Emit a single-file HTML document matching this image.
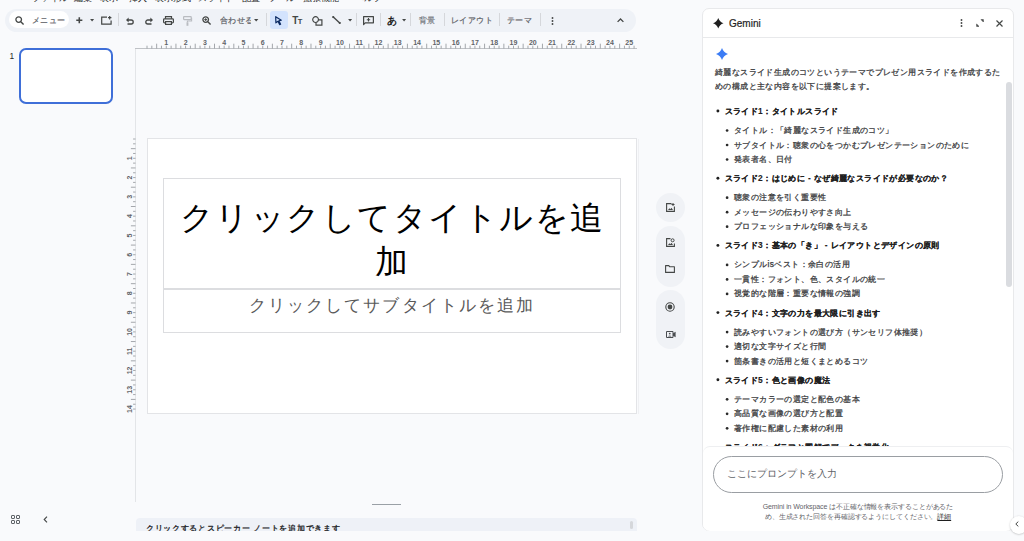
<!DOCTYPE html>
<html lang="ja">
<head>
<meta charset="utf-8">
<style>
*{box-sizing:border-box;margin:0;padding:0}
html,body{width:1024px;height:541px;overflow:hidden;background:#f9fafc;font-family:"Liberation Sans",sans-serif;color:#1f1f1f}
.a{position:absolute}
svg{position:absolute;overflow:visible}
/* toolbar */
#tb{left:5px;top:8.5px;width:631px;height:23px;border-radius:11.5px;background:#eff2f7}
#search{left:9px;top:11px;width:60px;height:17px;border-radius:9px;background:#fff}
.sep{position:absolute;top:13px;width:1px;height:13px;background:#d5d7db}
.tt{position:absolute;font-size:8.4px;color:#5f6368;line-height:10px;white-space:nowrap;top:15px;-webkit-text-stroke:0.2px currentColor;letter-spacing:0.4px}
.menu{position:absolute;top:-7px;font-size:8.6px;line-height:10px;color:#1f1f1f;white-space:nowrap}
/* ruler */
.rn{position:absolute;font-size:6px;line-height:6px;color:#5f6368;font-weight:bold;width:12px;text-align:center}
/* slide */
#slide{left:147px;top:138px;width:490px;height:276px;background:#fff;border:1px solid #e3e4e7}
#titlebox{left:163px;top:178px;width:458px;height:111px;border:1px solid #dcdde0}
#subbox{left:163px;top:289px;width:458px;height:44px;border:1px solid #dcdde0}
/* gemini */
#gp{left:702px;top:8px;width:312px;height:523px;background:#fff;border:1px solid #e8e9eb;border-radius:7px;overflow:hidden}
.gt{position:absolute;font-size:8.4px;line-height:12px;color:#3c4043;white-space:nowrap;letter-spacing:0.4px}
.gs{color:#38393b;-webkit-text-stroke:0.25px #38393b}
.gb{font-weight:bold;color:#1f1f1f;-webkit-text-stroke:0.1px #1f1f1f}
.dot{position:absolute;width:3px;height:3px;border-radius:50%;background:#1f1f1f}
.d2{width:2.8px;height:2.8px;background:#2a2a2a}
</style>
</head>
<body>
<!-- menu remnants -->
<div class="menu" style="left:32px">ファイル</div>
<div class="menu" style="left:74px">編集</div>
<div class="menu" style="left:100px">表示</div>
<div class="menu" style="left:129px">挿入</div>
<div class="menu" style="left:155px">表示形式</div>
<div class="menu" style="left:198px">スライド</div>
<div class="menu" style="left:242px">配置</div>
<div class="menu" style="left:268px">ツール</div>
<div class="menu" style="left:303px">拡張機能</div>
<div class="menu" style="left:355px">ヘルプ</div>

<!-- toolbar -->
<div id="tb" class="a"></div>
<div id="search" class="a"></div>
<!-- search icon -->
<svg style="left:15px;top:16px" width="10" height="9" viewBox="0 0 10 9"><circle cx="3.7" cy="3.6" r="2.8" fill="none" stroke="#444746" stroke-width="1.3"/><path d="M5.8 5.7 L8.6 8.4" stroke="#444746" stroke-width="1.4"/></svg>
<div class="tt" style="left:31.5px;color:#5f6368;letter-spacing:0.6px">メニュー</div>
<!-- plus -->
<svg style="left:75.5px;top:16.6px" width="6.6" height="6.6" viewBox="0 0 8 8"><path d="M4 0.3V7.7M0.3 4H7.7" stroke="#444746" stroke-width="1.9"/></svg>
<svg style="left:90.2px;top:19px" width="4.2" height="2.4" viewBox="0 0 5 3"><path d="M0 0H5L2.5 3Z" fill="#444746"/></svg>
<!-- new slide -->
<svg style="left:101px;top:16px" width="11" height="9" viewBox="0 0 11 9"><path d="M6 1.1H0.7V8.1H10.1V4.6" fill="none" stroke="#444746" stroke-width="1.2"/><path d="M8.7 0V3.4M7 1.7H10.4" stroke="#444746" stroke-width="1.2"/></svg>
<div class="sep" style="left:118px"></div>
<!-- undo -->
<svg style="left:126px;top:17px" width="8" height="8" viewBox="0 0 8 8"><path d="M2 3H5.2A2 2 0 0 1 5.2 7H1.5" fill="none" stroke="#444746" stroke-width="1.3"/><path d="M0 3L2.6 0.6V5.4Z" fill="#444746"/></svg>
<!-- redo -->
<svg style="left:145px;top:17px" width="8" height="8" viewBox="0 0 8 8"><path d="M6 3H2.8A2 2 0 0 0 2.8 7H6.5" fill="none" stroke="#444746" stroke-width="1.3"/><path d="M8 3L5.4 0.6V5.4Z" fill="#444746"/></svg>
<!-- print -->
<svg style="left:163px;top:16px" width="11" height="9" viewBox="0 0 11 9"><path d="M2.5 2.8V0.6H8.5V2.8" fill="none" stroke="#444746" stroke-width="1.2"/><rect x="0.6" y="2.8" width="9.8" height="4" rx="0.8" fill="none" stroke="#444746" stroke-width="1.2"/><rect x="2.6" y="5.6" width="5.8" height="2.8" fill="#eff2f7" stroke="#444746" stroke-width="1.2"/></svg>
<!-- paint format (disabled) -->
<svg style="left:183px;top:16px" width="9" height="10" viewBox="0 0 9 10"><rect x="0.6" y="0.6" width="7.6" height="3" rx="0.5" fill="none" stroke="#b9bcc1" stroke-width="1.2"/><path d="M8 2.2H8.6V5H4.4V6.4" fill="none" stroke="#b9bcc1" stroke-width="1.1"/><rect x="3.5" y="6.3" width="1.9" height="3.5" fill="#b9bcc1"/></svg>
<!-- zoom -->
<svg style="left:202px;top:16px" width="10" height="9" viewBox="0 0 10 9"><circle cx="3.7" cy="3.6" r="2.8" fill="none" stroke="#444746" stroke-width="1.3"/><path d="M5.8 5.7 L8.6 8.4" stroke="#444746" stroke-width="1.4"/><path d="M3.7 2.2V5M2.3 3.6H5.1" stroke="#444746" stroke-width="1"/></svg>
<div class="tt" style="left:220px;width:30.5px;overflow:hidden;color:#5f6368">合わせる</div>
<svg style="left:254.2px;top:18.8px" width="4.4" height="2.6" viewBox="0 0 5 3"><path d="M0 0H5L2.5 3Z" fill="#444746"/></svg>
<div class="sep" style="left:266px"></div>
<!-- select -->
<div class="a" style="left:269.5px;top:11px;width:18px;height:17.5px;border-radius:3px;background:#d3e3fd"></div>
<svg style="left:275px;top:16px" width="7" height="9" viewBox="0 0 7 9"><path d="M0.7 0.7L6.3 4.2L3.9 4.8L5.6 8.2L4.6 8.6L3 5.3L0.9 6.8Z" fill="none" stroke="#0b2a63" stroke-width="1.2" stroke-linejoin="round"/></svg>
<!-- Tt -->
<div class="a" style="left:292.3px;top:14.5px;font-size:10px;line-height:11px;font-weight:bold;color:#444746;letter-spacing:-0.6px">T<span style="font-size:7.5px">T</span></div>
<!-- shape -->
<svg style="left:312px;top:16px" width="11" height="10" viewBox="0 0 11 10"><circle cx="3.6" cy="3.6" r="2.9" fill="none" stroke="#444746" stroke-width="1.2"/><path d="M6.6 3.9H9.9V9.2H4V6.6" fill="none" stroke="#444746" stroke-width="1.2"/></svg>
<!-- line -->
<svg style="left:332px;top:16px" width="9" height="8" viewBox="0 0 9 8"><path d="M1 0.8L8 7.2" stroke="#444746" stroke-width="1.4"/><circle cx="1.2" cy="1" r="1.1" fill="#444746"/><circle cx="7.8" cy="7" r="1.1" fill="#444746"/></svg>
<svg style="left:348px;top:19px" width="4.2" height="2.4" viewBox="0 0 5 3"><path d="M0 0H5L2.5 3Z" fill="#444746"/></svg>
<div class="sep" style="left:356px"></div>
<!-- insert comment box -->
<svg style="left:363px;top:16px" width="11" height="9" viewBox="0 0 11 9"><path d="M0.6 8.6V0.6H10.4V6.8H2.2Z" fill="none" stroke="#444746" stroke-width="1.2" stroke-linejoin="round"/><path d="M5.5 2V5.4M3.8 3.7H7.2" stroke="#444746" stroke-width="1.1"/></svg>
<div class="sep" style="left:380px"></div>
<div class="a" style="left:386.5px;top:14.5px;font-size:10px;line-height:12px;color:#1f1f1f;font-weight:bold">あ</div>
<svg style="left:402px;top:19px" width="4.2" height="2.4" viewBox="0 0 5 3"><path d="M0 0H5L2.5 3Z" fill="#444746"/></svg>
<div class="sep" style="left:410px"></div>
<div class="tt" style="left:419px;color:#75797e">背景</div>
<div class="sep" style="left:444px"></div>
<div class="tt" style="left:451px;color:#5f6368">レイアウト</div>
<div class="sep" style="left:498.5px"></div>
<div class="tt" style="left:507px;color:#5f6368">テーマ</div>
<div class="sep" style="left:540px"></div>
<!-- more vert -->
<svg style="left:550.5px;top:16.5px" width="3" height="8" viewBox="0 0 3 8"><circle cx="1.5" cy="1" r="0.95" fill="#444746"/><circle cx="1.5" cy="4" r="0.95" fill="#444746"/><circle cx="1.5" cy="7" r="0.95" fill="#444746"/></svg>
<!-- caret up -->
<svg style="left:616.5px;top:18px" width="7" height="4.5" viewBox="0 0 7 4.5"><path d="M0.6 3.9L3.5 1L6.4 3.9" fill="none" stroke="#444746" stroke-width="1.3"/></svg>

<!-- filmstrip -->
<div class="a" style="left:9.5px;top:50.5px;font-size:8.4px;line-height:10px;color:#1f1f1f">1</div>
<div class="a" style="left:19px;top:48px;width:94px;height:56px;border:2px solid #3f6fd8;border-radius:7px;background:#fff"></div>

<!-- canvas frame lines -->
<div class="a" style="left:135px;top:48px;width:1px;height:454px;background:#e3e5e8"></div>
<div class="a" style="left:135px;top:48px;width:502px;height:1px;background:#bfc2c6"></div>
<!-- horizontal ruler -->
<svg style="left:0;top:0" width="1024" height="60"><g stroke="#8e9297" stroke-width="0.8"><line x1="147.00" y1="45.7" x2="147.00" y2="48.5"/><line x1="151.82" y1="45.7" x2="151.82" y2="48.5"/><line x1="156.65" y1="43.7" x2="156.65" y2="48.5"/><line x1="161.47" y1="45.7" x2="161.47" y2="48.5"/><line x1="166.29" y1="45.7" x2="166.29" y2="48.5"/><line x1="171.11" y1="45.7" x2="171.11" y2="48.5"/><line x1="175.94" y1="43.7" x2="175.94" y2="48.5"/><line x1="180.76" y1="45.7" x2="180.76" y2="48.5"/><line x1="185.58" y1="45.7" x2="185.58" y2="48.5"/><line x1="190.40" y1="45.7" x2="190.40" y2="48.5"/><line x1="195.22" y1="43.7" x2="195.22" y2="48.5"/><line x1="200.05" y1="45.7" x2="200.05" y2="48.5"/><line x1="204.87" y1="45.7" x2="204.87" y2="48.5"/><line x1="209.69" y1="45.7" x2="209.69" y2="48.5"/><line x1="214.51" y1="43.7" x2="214.51" y2="48.5"/><line x1="219.34" y1="45.7" x2="219.34" y2="48.5"/><line x1="224.16" y1="45.7" x2="224.16" y2="48.5"/><line x1="228.98" y1="45.7" x2="228.98" y2="48.5"/><line x1="233.81" y1="43.7" x2="233.81" y2="48.5"/><line x1="238.63" y1="45.7" x2="238.63" y2="48.5"/><line x1="243.45" y1="45.7" x2="243.45" y2="48.5"/><line x1="248.27" y1="45.7" x2="248.27" y2="48.5"/><line x1="253.09" y1="43.7" x2="253.09" y2="48.5"/><line x1="257.92" y1="45.7" x2="257.92" y2="48.5"/><line x1="262.74" y1="45.7" x2="262.74" y2="48.5"/><line x1="267.56" y1="45.7" x2="267.56" y2="48.5"/><line x1="272.38" y1="43.7" x2="272.38" y2="48.5"/><line x1="277.21" y1="45.7" x2="277.21" y2="48.5"/><line x1="282.03" y1="45.7" x2="282.03" y2="48.5"/><line x1="286.85" y1="45.7" x2="286.85" y2="48.5"/><line x1="291.67" y1="43.7" x2="291.67" y2="48.5"/><line x1="296.50" y1="45.7" x2="296.50" y2="48.5"/><line x1="301.32" y1="45.7" x2="301.32" y2="48.5"/><line x1="306.14" y1="45.7" x2="306.14" y2="48.5"/><line x1="310.97" y1="43.7" x2="310.97" y2="48.5"/><line x1="315.79" y1="45.7" x2="315.79" y2="48.5"/><line x1="320.61" y1="45.7" x2="320.61" y2="48.5"/><line x1="325.43" y1="45.7" x2="325.43" y2="48.5"/><line x1="330.25" y1="43.7" x2="330.25" y2="48.5"/><line x1="335.08" y1="45.7" x2="335.08" y2="48.5"/><line x1="339.90" y1="45.7" x2="339.90" y2="48.5"/><line x1="344.72" y1="45.7" x2="344.72" y2="48.5"/><line x1="349.54" y1="43.7" x2="349.54" y2="48.5"/><line x1="354.37" y1="45.7" x2="354.37" y2="48.5"/><line x1="359.19" y1="45.7" x2="359.19" y2="48.5"/><line x1="364.01" y1="45.7" x2="364.01" y2="48.5"/><line x1="368.83" y1="43.7" x2="368.83" y2="48.5"/><line x1="373.66" y1="45.7" x2="373.66" y2="48.5"/><line x1="378.48" y1="45.7" x2="378.48" y2="48.5"/><line x1="383.30" y1="45.7" x2="383.30" y2="48.5"/><line x1="388.12" y1="43.7" x2="388.12" y2="48.5"/><line x1="392.95" y1="45.7" x2="392.95" y2="48.5"/><line x1="397.77" y1="45.7" x2="397.77" y2="48.5"/><line x1="402.59" y1="45.7" x2="402.59" y2="48.5"/><line x1="407.41" y1="43.7" x2="407.41" y2="48.5"/><line x1="412.24" y1="45.7" x2="412.24" y2="48.5"/><line x1="417.06" y1="45.7" x2="417.06" y2="48.5"/><line x1="421.88" y1="45.7" x2="421.88" y2="48.5"/><line x1="426.70" y1="43.7" x2="426.70" y2="48.5"/><line x1="431.53" y1="45.7" x2="431.53" y2="48.5"/><line x1="436.35" y1="45.7" x2="436.35" y2="48.5"/><line x1="441.17" y1="45.7" x2="441.17" y2="48.5"/><line x1="446.00" y1="43.7" x2="446.00" y2="48.5"/><line x1="450.82" y1="45.7" x2="450.82" y2="48.5"/><line x1="455.64" y1="45.7" x2="455.64" y2="48.5"/><line x1="460.46" y1="45.7" x2="460.46" y2="48.5"/><line x1="465.28" y1="43.7" x2="465.28" y2="48.5"/><line x1="470.11" y1="45.7" x2="470.11" y2="48.5"/><line x1="474.93" y1="45.7" x2="474.93" y2="48.5"/><line x1="479.75" y1="45.7" x2="479.75" y2="48.5"/><line x1="484.57" y1="43.7" x2="484.57" y2="48.5"/><line x1="489.40" y1="45.7" x2="489.40" y2="48.5"/><line x1="494.22" y1="45.7" x2="494.22" y2="48.5"/><line x1="499.04" y1="45.7" x2="499.04" y2="48.5"/><line x1="503.87" y1="43.7" x2="503.87" y2="48.5"/><line x1="508.69" y1="45.7" x2="508.69" y2="48.5"/><line x1="513.51" y1="45.7" x2="513.51" y2="48.5"/><line x1="518.33" y1="45.7" x2="518.33" y2="48.5"/><line x1="523.15" y1="43.7" x2="523.15" y2="48.5"/><line x1="527.98" y1="45.7" x2="527.98" y2="48.5"/><line x1="532.80" y1="45.7" x2="532.80" y2="48.5"/><line x1="537.62" y1="45.7" x2="537.62" y2="48.5"/><line x1="542.44" y1="43.7" x2="542.44" y2="48.5"/><line x1="547.27" y1="45.7" x2="547.27" y2="48.5"/><line x1="552.09" y1="45.7" x2="552.09" y2="48.5"/><line x1="556.91" y1="45.7" x2="556.91" y2="48.5"/><line x1="561.73" y1="43.7" x2="561.73" y2="48.5"/><line x1="566.56" y1="45.7" x2="566.56" y2="48.5"/><line x1="571.38" y1="45.7" x2="571.38" y2="48.5"/><line x1="576.20" y1="45.7" x2="576.20" y2="48.5"/><line x1="581.02" y1="43.7" x2="581.02" y2="48.5"/><line x1="585.85" y1="45.7" x2="585.85" y2="48.5"/><line x1="590.67" y1="45.7" x2="590.67" y2="48.5"/><line x1="595.49" y1="45.7" x2="595.49" y2="48.5"/><line x1="600.32" y1="43.7" x2="600.32" y2="48.5"/><line x1="605.14" y1="45.7" x2="605.14" y2="48.5"/><line x1="609.96" y1="45.7" x2="609.96" y2="48.5"/><line x1="614.78" y1="45.7" x2="614.78" y2="48.5"/><line x1="619.61" y1="43.7" x2="619.61" y2="48.5"/><line x1="624.43" y1="45.7" x2="624.43" y2="48.5"/><line x1="629.25" y1="45.7" x2="629.25" y2="48.5"/><line x1="634.07" y1="45.7" x2="634.07" y2="48.5"/></g><g font-size="7" font-weight="bold" fill="#5f6368" text-anchor="middle" font-family="Liberation Sans"><text x="166.29" y="45">1</text><text x="185.58" y="45">2</text><text x="204.87" y="45">3</text><text x="224.16" y="45">4</text><text x="243.45" y="45">5</text><text x="262.74" y="45">6</text><text x="282.03" y="45">7</text><text x="301.32" y="45">8</text><text x="320.61" y="45">9</text><text x="339.90" y="45">10</text><text x="359.19" y="45">11</text><text x="378.48" y="45">12</text><text x="397.77" y="45">13</text><text x="417.06" y="45">14</text><text x="436.35" y="45">15</text><text x="455.64" y="45">16</text><text x="474.93" y="45">17</text><text x="494.22" y="45">18</text><text x="513.51" y="45">19</text><text x="532.80" y="45">20</text><text x="552.09" y="45">21</text><text x="571.38" y="45">22</text><text x="590.67" y="45">23</text><text x="609.96" y="45">24</text><text x="629.25" y="45">25</text></g></svg>
<!-- vertical ruler -->
<svg style="left:0;top:0" width="140" height="541"><g stroke="#8e9297" stroke-width="0.8"><line x1="133.1" y1="139.00" x2="135.5" y2="139.00"/><line x1="133.1" y1="143.82" x2="135.5" y2="143.82"/><line x1="130.9" y1="148.65" x2="135.5" y2="148.65"/><line x1="133.1" y1="153.47" x2="135.5" y2="153.47"/><line x1="133.1" y1="158.29" x2="135.5" y2="158.29"/><line x1="133.1" y1="163.11" x2="135.5" y2="163.11"/><line x1="130.9" y1="167.94" x2="135.5" y2="167.94"/><line x1="133.1" y1="172.76" x2="135.5" y2="172.76"/><line x1="133.1" y1="177.58" x2="135.5" y2="177.58"/><line x1="133.1" y1="182.40" x2="135.5" y2="182.40"/><line x1="130.9" y1="187.22" x2="135.5" y2="187.22"/><line x1="133.1" y1="192.05" x2="135.5" y2="192.05"/><line x1="133.1" y1="196.87" x2="135.5" y2="196.87"/><line x1="133.1" y1="201.69" x2="135.5" y2="201.69"/><line x1="130.9" y1="206.51" x2="135.5" y2="206.51"/><line x1="133.1" y1="211.34" x2="135.5" y2="211.34"/><line x1="133.1" y1="216.16" x2="135.5" y2="216.16"/><line x1="133.1" y1="220.98" x2="135.5" y2="220.98"/><line x1="130.9" y1="225.81" x2="135.5" y2="225.81"/><line x1="133.1" y1="230.63" x2="135.5" y2="230.63"/><line x1="133.1" y1="235.45" x2="135.5" y2="235.45"/><line x1="133.1" y1="240.27" x2="135.5" y2="240.27"/><line x1="130.9" y1="245.09" x2="135.5" y2="245.09"/><line x1="133.1" y1="249.92" x2="135.5" y2="249.92"/><line x1="133.1" y1="254.74" x2="135.5" y2="254.74"/><line x1="133.1" y1="259.56" x2="135.5" y2="259.56"/><line x1="130.9" y1="264.38" x2="135.5" y2="264.38"/><line x1="133.1" y1="269.21" x2="135.5" y2="269.21"/><line x1="133.1" y1="274.03" x2="135.5" y2="274.03"/><line x1="133.1" y1="278.85" x2="135.5" y2="278.85"/><line x1="130.9" y1="283.67" x2="135.5" y2="283.67"/><line x1="133.1" y1="288.50" x2="135.5" y2="288.50"/><line x1="133.1" y1="293.32" x2="135.5" y2="293.32"/><line x1="133.1" y1="298.14" x2="135.5" y2="298.14"/><line x1="130.9" y1="302.97" x2="135.5" y2="302.97"/><line x1="133.1" y1="307.79" x2="135.5" y2="307.79"/><line x1="133.1" y1="312.61" x2="135.5" y2="312.61"/><line x1="133.1" y1="317.43" x2="135.5" y2="317.43"/><line x1="130.9" y1="322.25" x2="135.5" y2="322.25"/><line x1="133.1" y1="327.08" x2="135.5" y2="327.08"/><line x1="133.1" y1="331.90" x2="135.5" y2="331.90"/><line x1="133.1" y1="336.72" x2="135.5" y2="336.72"/><line x1="130.9" y1="341.54" x2="135.5" y2="341.54"/><line x1="133.1" y1="346.37" x2="135.5" y2="346.37"/><line x1="133.1" y1="351.19" x2="135.5" y2="351.19"/><line x1="133.1" y1="356.01" x2="135.5" y2="356.01"/><line x1="130.9" y1="360.83" x2="135.5" y2="360.83"/><line x1="133.1" y1="365.66" x2="135.5" y2="365.66"/><line x1="133.1" y1="370.48" x2="135.5" y2="370.48"/><line x1="133.1" y1="375.30" x2="135.5" y2="375.30"/><line x1="130.9" y1="380.12" x2="135.5" y2="380.12"/><line x1="133.1" y1="384.95" x2="135.5" y2="384.95"/><line x1="133.1" y1="389.77" x2="135.5" y2="389.77"/><line x1="133.1" y1="394.59" x2="135.5" y2="394.59"/><line x1="130.9" y1="399.41" x2="135.5" y2="399.41"/><line x1="133.1" y1="404.24" x2="135.5" y2="404.24"/><line x1="133.1" y1="409.06" x2="135.5" y2="409.06"/></g><g font-size="7" font-weight="bold" fill="#5f6368" text-anchor="middle" font-family="Liberation Sans"><text x="0" y="0" transform="translate(131.8,158.29) rotate(-90)">1</text><text x="0" y="0" transform="translate(131.8,177.58) rotate(-90)">2</text><text x="0" y="0" transform="translate(131.8,196.87) rotate(-90)">3</text><text x="0" y="0" transform="translate(131.8,216.16) rotate(-90)">4</text><text x="0" y="0" transform="translate(131.8,235.45) rotate(-90)">5</text><text x="0" y="0" transform="translate(131.8,254.74) rotate(-90)">6</text><text x="0" y="0" transform="translate(131.8,274.03) rotate(-90)">7</text><text x="0" y="0" transform="translate(131.8,293.32) rotate(-90)">8</text><text x="0" y="0" transform="translate(131.8,312.61) rotate(-90)">9</text><text x="0" y="0" transform="translate(131.8,331.90) rotate(-90)">10</text><text x="0" y="0" transform="translate(131.8,351.19) rotate(-90)">11</text><text x="0" y="0" transform="translate(131.8,370.48) rotate(-90)">12</text><text x="0" y="0" transform="translate(131.8,389.77) rotate(-90)">13</text><text x="0" y="0" transform="translate(131.8,409.06) rotate(-90)">14</text></g></svg>

<!-- slide -->
<div id="slide" class="a"></div>
<div class="a" style="left:638px;top:139px;width:1px;height:275px;background:#eff0f3"></div>
<div id="titlebox" class="a"></div>
<div id="subbox" class="a"></div>
<div class="a" style="left:163px;top:195.8px;width:458px;text-align:center;font-size:33.4px;line-height:44px;color:#000;letter-spacing:1.5px">クリックしてタイトルを追<br>加</div>
<div class="a" style="left:163px;top:295px;width:458px;text-align:center;font-size:17px;line-height:22px;color:#595959;letter-spacing:2.1px">クリックしてサブタイトルを追加</div>

<!-- side icon rail -->
<div class="a" style="left:656px;top:193px;width:29px;height:29px;border-radius:14.5px;background:#f0f2f6"></div>
<div class="a" style="left:656px;top:225.5px;width:29px;height:61px;border-radius:14.5px;background:#f0f2f6"></div>
<div class="a" style="left:656px;top:290px;width:29px;height:59px;border-radius:14.5px;background:#f0f2f6"></div>
<!-- rail icons -->
<svg style="left:665.5px;top:202.5px" width="9" height="9" viewBox="0 0 9 9"><path d="M5.5 0.6H0.6V8.4H8.4V3.5" fill="none" stroke="#444746" stroke-width="1.1"/><path d="M7 0V3M5.5 1.5H8.5" stroke="#444746" stroke-width="1"/><path d="M2 7L3.4 5.2L4.4 6.2L5.4 4.8L7 7Z" fill="#444746"/></svg>
<svg style="left:665.5px;top:237.5px" width="9" height="9" viewBox="0 0 9 9"><path d="M4.5 0.6H0.6V8.4H8.4V5.5" fill="none" stroke="#444746" stroke-width="1.1"/><circle cx="6.6" cy="2.3" r="1.5" fill="none" stroke="#444746" stroke-width="1"/><path d="M2 7L3.4 5.2L4.4 6.2L5.4 4.8L7 7Z" fill="#444746"/></svg>
<svg style="left:665px;top:264.5px" width="10" height="8" viewBox="0 0 10 8"><path d="M0.6 0.6H3.8L4.8 1.8H9.4V7.4H0.6Z" fill="none" stroke="#444746" stroke-width="1.1" stroke-linejoin="round"/></svg>
<svg style="left:665px;top:302px" width="10" height="10" viewBox="0 0 10 10"><circle cx="5" cy="5" r="4.2" fill="none" stroke="#444746" stroke-width="1.1"/><circle cx="5" cy="5" r="2.4" fill="#444746"/></svg>
<svg style="left:666px;top:330.5px" width="10" height="7" viewBox="0 0 10 7"><path d="M0.5 0.5H7V6.5H0.5Z" fill="none" stroke="#4a4d50" stroke-width="1"/><path d="M7 2.3L9.6 0.8V6.2L7 4.7Z" fill="#4a4d50"/><circle cx="3.75" cy="2.6" r="0.9" fill="#4a4d50"/><path d="M2 5.6Q3.75 3.4 5.5 5.6Z" fill="#4a4d50"/></svg>

<!-- bottom left -->
<svg style="left:11px;top:515px" width="9" height="9" viewBox="0 0 9 9"><rect x="0.5" y="0.5" width="3" height="3" rx="0.4" fill="none" stroke="#5f6368" stroke-width="1"/><rect x="5.5" y="0.5" width="3" height="3" rx="0.4" fill="none" stroke="#5f6368" stroke-width="1"/><rect x="0.5" y="5.5" width="3" height="3" rx="0.4" fill="none" stroke="#5f6368" stroke-width="1"/><rect x="5.5" y="5.5" width="3" height="3" rx="0.4" fill="none" stroke="#5f6368" stroke-width="1"/></svg>
<svg style="left:43px;top:516px" width="5" height="7" viewBox="0 0 5 7"><path d="M4 0.7L1.2 3.5L4 6.3" fill="none" stroke="#444746" stroke-width="1.1"/></svg>
<!-- notes divider handle -->
<div class="a" style="left:372px;top:504px;width:29px;height:1px;background:#9aa0a6"></div>
<!-- notes -->
<div class="a" style="left:136px;top:518px;width:501px;height:13px;background:#eef1f7;border-radius:4px 4px 0 0;overflow:hidden">
  <div class="a" style="left:10px;top:6.3px;font-size:8px;line-height:10px;color:#202124;white-space:nowrap;letter-spacing:0.7px;-webkit-text-stroke:0.3px #202124">クリックするとスピーカー ノートを追加できます</div>
  <div class="a" style="left:494px;top:3px;width:3px;height:8px;border-radius:1.5px;background:#d5d7db"></div>
</div>

<!-- gemini panel -->
<div id="gp" class="a"></div>
<svg style="left:712.8px;top:17.8px" width="10.5" height="10.5" viewBox="0 0 10 10"><path d="M5 10A8 8 0 0 0 0 5A8 8 0 0 0 5 0A8 8 0 0 0 10 5A8 8 0 0 0 5 10Z" fill="#1f1f1f"/></svg>
<div class="a" style="left:729px;top:17.5px;font-size:10px;line-height:11px;color:#1f1f1f;-webkit-text-stroke:0.2px #1f1f1f">Gemini</div>
<svg style="left:959.5px;top:19px" width="3" height="8" viewBox="0 0 3 8"><circle cx="1.5" cy="1" r="0.95" fill="#444746"/><circle cx="1.5" cy="4" r="0.95" fill="#444746"/><circle cx="1.5" cy="7" r="0.95" fill="#444746"/></svg>
<svg style="left:976px;top:19px" width="8" height="8" viewBox="0 0 8 8"><path d="M5 0.6L7.4 0.6L7.4 3Z" fill="#444746" stroke="#444746" stroke-width="0.6" stroke-linejoin="round"/><path d="M3 7.4L0.6 7.4L0.6 5Z" fill="#444746" stroke="#444746" stroke-width="0.6" stroke-linejoin="round"/></svg>
<svg style="left:996px;top:19.5px" width="7" height="7" viewBox="0 0 7 7"><path d="M0.5 0.5L6.5 6.5M6.5 0.5L0.5 6.5" stroke="#444746" stroke-width="1.2"/></svg>
<div class="a" style="left:703px;top:37px;width:310px;height:1px;background:#e8e9eb"></div>
<!-- blue spark -->
<svg style="left:715.6px;top:47.8px" width="12" height="12" viewBox="0 0 10 10"><path d="M5 10A8 8 0 0 0 0 5A8 8 0 0 0 5 0A8 8 0 0 0 10 5A8 8 0 0 0 5 10Z" fill="#3b7cf5"/></svg>

<div class="gt gs" style="left:715px;top:66px">綺麗なスライド生成のコツというテーマでプレゼン用スライドを作成するた</div>
<div class="gt gs" style="left:715px;top:80px">めの構成と主な内容を以下に提案します。</div>

<svg style="left:0;top:0" width="1024" height="541"><circle cx="717.9" cy="111.00" r="1.45" fill="#1f1f1f"/><circle cx="727.1" cy="130.50" r="1.35" fill="#2a2a2a"/><circle cx="727.1" cy="145.00" r="1.35" fill="#2a2a2a"/><circle cx="727.1" cy="159.50" r="1.35" fill="#2a2a2a"/><circle cx="717.9" cy="178.20" r="1.45" fill="#1f1f1f"/><circle cx="727.1" cy="197.70" r="1.35" fill="#2a2a2a"/><circle cx="727.1" cy="212.20" r="1.35" fill="#2a2a2a"/><circle cx="727.1" cy="226.70" r="1.35" fill="#2a2a2a"/><circle cx="717.9" cy="245.40" r="1.45" fill="#1f1f1f"/><circle cx="727.1" cy="264.90" r="1.35" fill="#2a2a2a"/><circle cx="727.1" cy="279.40" r="1.35" fill="#2a2a2a"/><circle cx="727.1" cy="293.90" r="1.35" fill="#2a2a2a"/><circle cx="717.9" cy="312.60" r="1.45" fill="#1f1f1f"/><circle cx="727.1" cy="332.10" r="1.35" fill="#2a2a2a"/><circle cx="727.1" cy="346.60" r="1.35" fill="#2a2a2a"/><circle cx="727.1" cy="361.10" r="1.35" fill="#2a2a2a"/><circle cx="717.9" cy="379.80" r="1.45" fill="#1f1f1f"/><circle cx="727.1" cy="399.30" r="1.35" fill="#2a2a2a"/><circle cx="727.1" cy="413.80" r="1.35" fill="#2a2a2a"/><circle cx="727.1" cy="428.30" r="1.35" fill="#2a2a2a"/></svg><div class="gt gb" style="left:724.5px;top:105.0px">スライド1：タイトルスライド</div>
<div class="gt gs" style="left:734px;top:124.0px">タイトル：「綺麗なスライド生成のコツ」</div>
<div class="gt gs" style="left:734px;top:138.5px">サブタイトル：聴衆の心をつかむプレゼンテーションのために</div>
<div class="gt gs" style="left:734px;top:153.0px">発表者名、日付</div>
<div class="gt gb" style="left:724.5px;top:172.2px">スライド2：はじめに - なぜ綺麗なスライドが必要なのか？</div>
<div class="gt gs" style="left:734px;top:191.2px">聴衆の注意を引く重要性</div>
<div class="gt gs" style="left:734px;top:205.7px">メッセージの伝わりやすさ向上</div>
<div class="gt gs" style="left:734px;top:220.2px">プロフェッショナルな印象を与える</div>
<div class="gt gb" style="left:724.5px;top:239.4px">スライド3：基本の「き」 - レイアウトとデザインの原則</div>
<div class="gt gs" style="left:734px;top:258.4px">シンプルisベスト：余白の活用</div>
<div class="gt gs" style="left:734px;top:272.9px">一貫性：フォント、色、スタイルの統一</div>
<div class="gt gs" style="left:734px;top:287.4px">視覚的な階層：重要な情報の強調</div>
<div class="gt gb" style="left:724.5px;top:306.6px">スライド4：文字の力を最大限に引き出す</div>
<div class="gt gs" style="left:734px;top:325.6px">読みやすいフォントの選び方（サンセリフ体推奨）</div>
<div class="gt gs" style="left:734px;top:340.1px">適切な文字サイズと行間</div>
<div class="gt gs" style="left:734px;top:354.6px">箇条書きの活用と短くまとめるコツ</div>
<div class="gt gb" style="left:724.5px;top:373.8px">スライド5：色と画像の魔法</div>
<div class="gt gs" style="left:734px;top:392.8px">テーマカラーの選定と配色の基本</div>
<div class="gt gs" style="left:734px;top:407.3px">高品質な画像の選び方と配置</div>
<div class="gt gs" style="left:734px;top:421.8px">著作権に配慮した素材の利用</div>
<div class="gt gb" style="left:724.5px;top:441.0px">スライド6：グラフと図解でデータを視覚化</div>


<!-- scrollbar -->
<div class="a" style="left:1006px;top:81.5px;width:6px;height:205px;border-radius:3px;background:#dadce0"></div>

<!-- input card -->
<div class="a" style="left:703px;top:446px;width:310px;height:85px;background:#fff;border-top:1px solid #eeeff1;border-radius:7px 7px 7px 7px"></div>
<div class="a" style="left:713px;top:455.5px;width:290px;height:37px;border:1px solid #9a9ea3;border-radius:18.5px;background:#fff"></div>
<div class="a" style="left:727px;top:467.5px;font-size:9.6px;line-height:12px;color:#5f6368;white-space:nowrap">ここにプロンプトを入力</div>
<div class="a" style="left:703px;top:502px;width:310px;text-align:center;font-size:7px;line-height:9.6px;color:#5f6368;letter-spacing:-0.1px">Gemini in Workspace は不正確な情報を表示することがあるた<br>め、生成された回答を再確認するようにしてください。<span style="text-decoration:underline;color:#1f1f1f">詳細</span></div>

<!-- collapse button -->
<div class="a" style="left:1009.5px;top:515.5px;width:18px;height:18px;border-radius:9px;background:#fff;box-shadow:0 0.5px 2px rgba(0,0,0,0.25)"></div>
<svg style="left:1014.5px;top:521px" width="4" height="6" viewBox="0 0 4 6"><path d="M3.3 0.6L0.8 3L3.3 5.4" fill="none" stroke="#444746" stroke-width="1"/></svg>

</body>
</html>
